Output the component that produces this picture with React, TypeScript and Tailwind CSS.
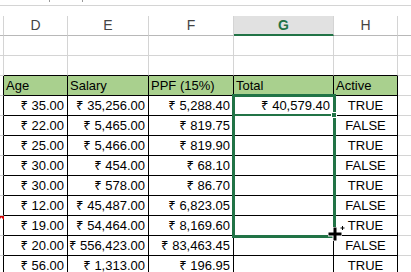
import React from 'react';

const W = ['w-[4px]', 'w-[64px]', 'w-[81px]', 'w-[85px]', 'w-[100px]', 'w-[64px]', 'flex-1'];

const data = [
  ['35.00', '35,256.00', '5,288.40', '40,579.40', 'TRUE'],
  ['22.00', '5,465.00', '819.75', '', 'FALSE'],
  ['25.00', '5,466.00', '819.90', '', 'TRUE'],
  ['30.00', '454.00', '68.10', '', 'FALSE'],
  ['30.00', '578.00', '86.70', '', 'TRUE'],
  ['12.00', '45,487.00', '6,823.05', '', 'FALSE'],
  ['19.00', '54,464.00', '8,169.60', '', 'TRUE'],
  ['20.00', '556,423.00', '83,463.45', '', 'FALSE'],
  ['56.00', '1,313.00', '196.95', '', 'TRUE'],
];

function HeaderRow() {
  const letters = ['', 'D', 'E', 'F', 'G', 'H', ''];
  return (
    <div className="flex h-[20px]">
      {letters.map((l, i) => (
        <div
          key={i}
          className={`${W[i]} flex items-center justify-center text-[14px] ${
            i === 4
              ? 'bg-[#e1e1e1] border-b-2 border-b-[#217346] text-[#217346] font-bold'
              : 'border-b border-b-[#b8b8b8] text-[#444]'
          } ${i < 6 ? 'border-r border-r-[#d4d4d4]' : ''}`}
        >
          {l}
        </div>
      ))}
    </div>
  );
}

function EmptyRow({ tableBelow }: { tableBelow?: boolean }) {
  return (
    <div className="flex h-[20px]">
      {W.map((w, i) => (
        <div
          key={i}
          className={`${w} border-b ${
            tableBelow && i >= 1 && i <= 5 ? 'border-b-black' : 'border-b-[#d4d4d4]'
          } ${i < 6 ? 'border-r border-r-[#d4d4d4]' : ''}`}
        />
      ))}
    </div>
  );
}

function TableRow({ cells, head }: { cells: string[]; head?: boolean }) {
  return (
    <div className="flex h-[20px]">
      <div className="w-[4px] border-r border-r-black border-b border-b-[#d4d4d4]" />
      {cells.map((c, i) => {
        const align = head ? 'justify-start pl-[2px]' : i === 4 ? 'justify-center' : 'justify-end pr-[3px]';
        const text = head || i === 4 || c === '' ? c : `₹ ${c}`;
        return (
          <div
            key={i}
            className={`${W[i + 1]} flex items-center ${align} border-r border-r-black border-b border-b-black whitespace-nowrap overflow-hidden ${
              head ? 'bg-[#a9d08e]' : 'bg-white'
            }`}
          >
            {text}
          </div>
        );
      })}
      <div className="flex-1 border-b border-b-[#d4d4d4]" />
    </div>
  );
}

export default function App() {
  return (
    <div className="relative w-[411px] h-[272px] overflow-hidden bg-white text-black text-[13px] [font-family:'Liberation_Sans','Noto_Sans',sans-serif]">
      <div className="h-[5px] relative">
        <span className="absolute left-[49px] top-0 w-px h-[2px] bg-[#9a9a9a]" />
        <span className="absolute left-[82px] top-0 w-px h-[2px] bg-[#9a9a9a]" />
      </div>
      <div className="h-px bg-[#d4d4d4]" />
      <div className="h-[10px]" />
      <HeaderRow />
      <EmptyRow />
      <EmptyRow tableBelow />
      <TableRow head cells={['Age', 'Salary', 'PPF (15%)', 'Total', 'Active']} />
      {data.map((r, i) => (
        <TableRow key={i} cells={r} />
      ))}

      {/* comment marker */}
      <svg className="absolute left-0 top-[216px]" width="5" height="6" viewBox="0 0 5 6">
        <polygon points="0,0 4,0 4,4" fill="#d40000" />
        <polygon points="0,0 2,0 0,3" fill="#d40000" />
      </svg>

      {/* fill selection */}
      <div className="absolute left-[232px] top-[94px] w-[104px] h-[144px] border-[3px] border-[#217346]" />
      <div className="absolute left-[232px] top-[114px] w-[102px] h-[2px] bg-[#217346]" />
      <div className="absolute left-[331px] top-[112px] w-[6px] h-[6px] bg-[#217346] border border-white" />

      {/* cursor */}
      <svg className="absolute left-[326px] top-[223px]" width="22" height="20" viewBox="0 0 22 20">
        <path d="M2 11H16M9 4V18" stroke="#fff" strokeWidth="5" />
        <path d="M2.5 11H15.5M9 4.5V17.5" stroke="#000" strokeWidth="3" />
        <path d="M14 5H19M16.5 2.5V7.5" stroke="#fff" strokeWidth="2.5" />
        <path d="M14.5 5H18.5M16.5 3V7" stroke="#000" strokeWidth="1" />
      </svg>
    </div>
  );
}
